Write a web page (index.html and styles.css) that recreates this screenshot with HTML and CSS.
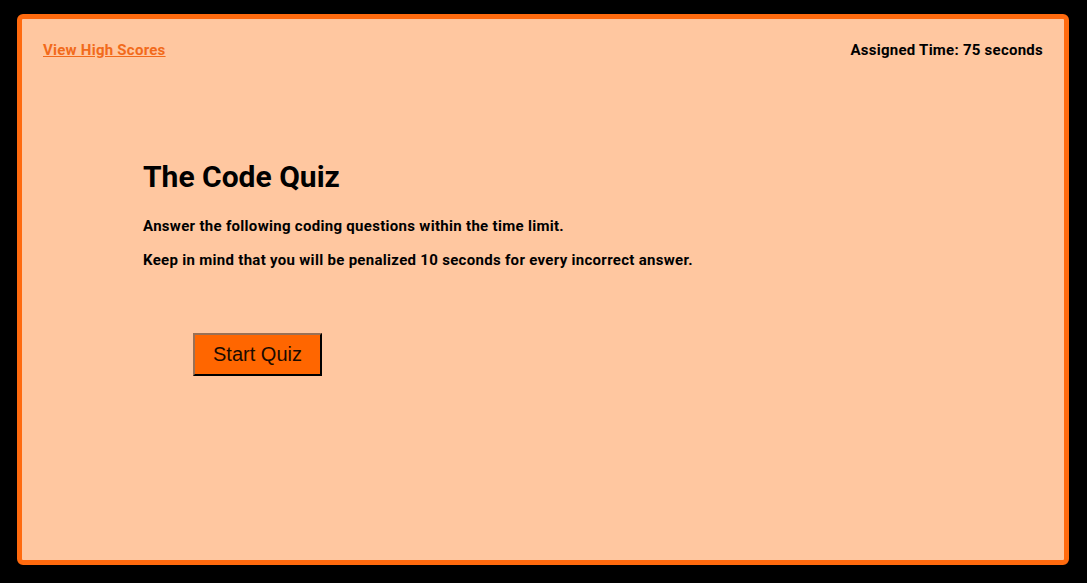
FILE: index.html
```html
<!DOCTYPE html>
<html>
<head>
<meta charset="utf-8">
<link rel="stylesheet" href="styles.css">
</head>
<body>
<div class="frame">
  <header class="topbar">
    <a class="scores" href="#">View High Scores</a>
    <div class="timer">Assigned Time: 75 seconds</div>
  </header>
  <main class="intro">
    <h1 class="title">The Code Quiz</h1>
    <p class="text">Answer the following coding questions within the time limit.</p>
    <p class="text">Keep in mind that you will be penalized 10 seconds for every incorrect answer.</p>
    <button class="start">Start Quiz</button>
  </main>
</div>
</body>
</html>
```
FILE: styles.css
```css
html, body {
  margin: 0;
  background: #000;
  height: 100%;
}
body {
  padding: 14px 18px 18px 17px;
  box-sizing: border-box;
  font-family: "Roboto", "Liberation Sans", sans-serif;
}
.frame {
  height: 551px;
  box-sizing: border-box;
  border: 5px solid #ff6a0e;
  border-radius: 6px;
  background: #ffc7a0;
  padding: 21px 21px 0 21px;
}
.topbar {
  display: flex;
  justify-content: space-between;
  align-items: center;
  font-size: 15px;
  letter-spacing: 0.25px;
  font-weight: 700;
  height: 20px;
}
.scores {
  color: #f26a1b;
  text-decoration: underline;
}
.timer {
  color: #000;
}
.intro {
  padding: 99px 0 0 100px;
}
.title {
  margin: 0 0 22px;
  font-size: 30px;
  font-weight: 700;
  line-height: 36px;
}
.text {
  margin: 0 0 16px;
  font-size: 15px;
  letter-spacing: 0.3px;
  font-weight: 700;
  line-height: 18px;
}
.start {
  margin: 48px 0 0 50px;
  width: 129px;
  height: 43px;
  background: #ff6600;
  border: 2px outset #8a5a3c;
  border-color: #9a7055 #3a1a0a #3a1a0a #9a7055;
  font-family: "Liberation Sans", Arial, sans-serif;
  font-size: 20px;
  color: #1a0a00;
  padding: 0;
}
```
